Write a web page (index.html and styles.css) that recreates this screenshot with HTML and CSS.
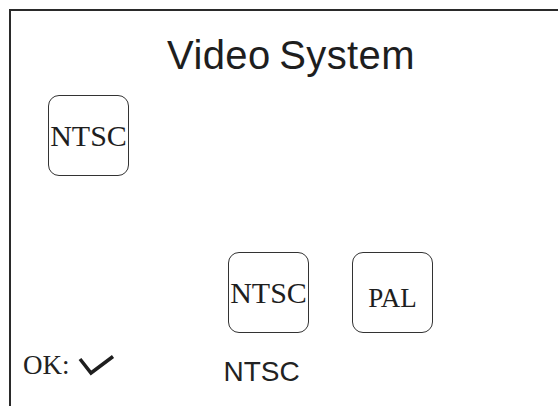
FILE: index.html
```html
<!DOCTYPE html>
<html lang="en">
<head>
  <meta charset="UTF-8" />
  <title>Video System</title>
  <link rel="stylesheet" href="styles.css">
</head>
<body>
  <div class="frame">
    <h1 class="title">Video System</h1>

    <div class="key current">NTSC</div>

    <div class="options">
      <div class="key">NTSC</div>
      <div class="key pal">PAL</div>
    </div>

    <div class="footer">
      <span class="ok">OK:</span>
      <svg class="check" width="38" height="22" viewBox="0 0 38 22">
        <polyline points="2,4 13,18 35,1.5" fill="none" stroke="#1e1e1e" stroke-width="3.5" />
      </svg>
      <span class="selected">NTSC</span>
    </div>
  </div>
</body>
</html>
```

FILE: styles.css
```css
html, body {
  margin: 0;
  height: 100%;
  overflow: hidden;
  background: #fff;
}
body {
  box-sizing: border-box;
  padding: 9px 0 0 9px;
  color: #222;
}
.frame {
  box-sizing: border-box;
  height: 100%;
  border-top: 2px solid #2a2a2a;
  border-left: 2px solid #2a2a2a;
  overflow: hidden;
}
.title {
  margin: 24px 0 0 0;
  padding-left: 13px;
  font-family: "Liberation Sans", Arial, sans-serif;
  font-weight: normal;
  font-size: 40px;
  line-height: 40px;
  letter-spacing: 0.4px;
  word-spacing: -3px;
  text-align: center;
  color: #1e1e1e;
}
.key {
  width: 81px;
  height: 81px;
  box-sizing: border-box;
  border: 1.5px solid #333;
  border-radius: 11px;
  display: flex;
  align-items: center;
  justify-content: center;
  font-family: "Liberation Serif", "Times New Roman", serif;
  font-size: 30px;
  line-height: 1;
  color: #1e1e1e;
}
.current {
  margin: 20px 0 0 37px;
}
.options {
  display: flex;
  gap: 43px;
  margin: 76px 0 0 217px;
}
.pal {
  font-size: 27px;
  padding-top: 12px;
}
.footer {
  display: flex;
  align-items: flex-start;
  margin: 17px 0 0 12px;
}
.ok {
  font-family: "Liberation Serif", "Times New Roman", serif;
  font-size: 27px;
  line-height: 30px;
}
.check {
  margin: 5px 0 0 8px;
}
.selected {
  margin: 6px 0 0 108px;
  font-family: "Liberation Sans", Arial, sans-serif;
  font-size: 28px;
  line-height: 32px;
}
```
